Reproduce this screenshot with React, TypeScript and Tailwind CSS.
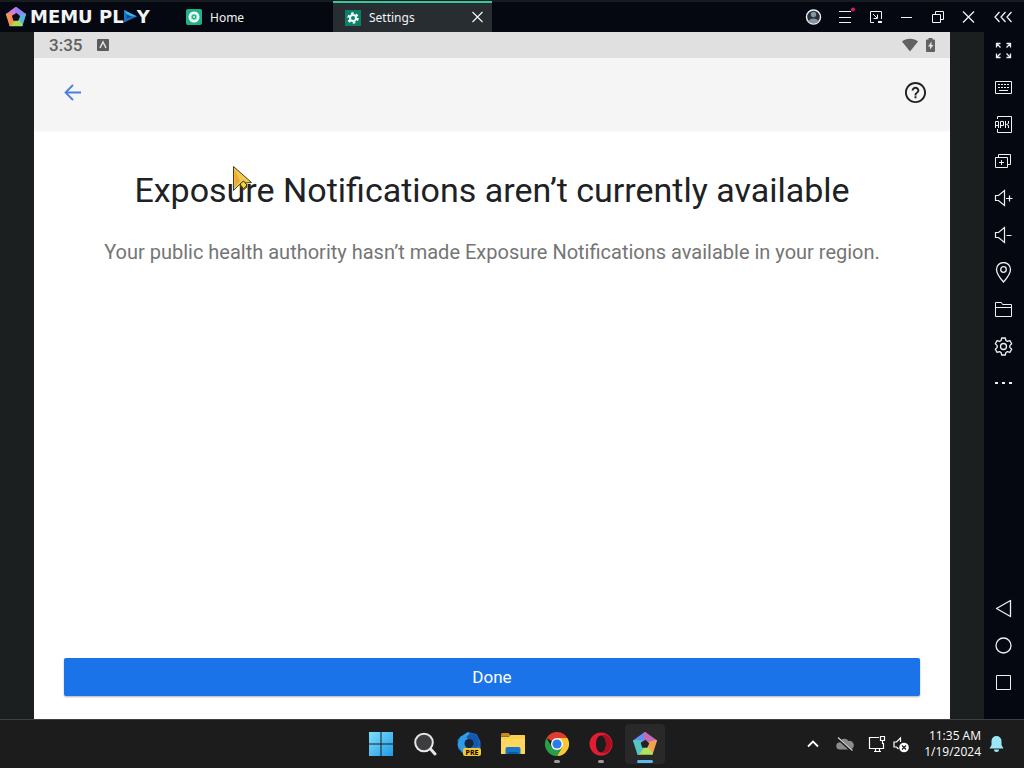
import type { ReactNode } from 'react'

interface IconProps {
  children: ReactNode
  size?: number
  width?: number
}

// Outline icon on a 21x21 grid, one unit per pixel by default
const Icon = ({ children, size = 21, width = 1 }: IconProps) => (
  <svg width={size} height={size} viewBox="0 0 21 21" fill="none" stroke="currentColor" strokeWidth={width} aria-hidden="true">
    {children}
  </svg>
)

const PentagonLogo = ({ size }: { size: number }) => (
  <svg width={size} height={size} viewBox="0 0 24 24" strokeLinejoin="round" strokeWidth="2" aria-hidden="true">
    <path d="M12 2 2 9.200 8.500 10.500 14 7.500Z" fill="#d07be0" stroke="#d07be0" />
    <path d="M12 2 22 9.200 16 11.500 12 7.500Z" fill="#9a80f5" stroke="#9a80f5" />
    <path d="M22 9.200 18.200 21 13.500 16.500 16 11Z" fill="#56b8d8" stroke="#56b8d8" />
    <path d="M18.200 21H5.800L9 15.500 14.500 16Z" fill="#a6dc58" stroke="#a6dc58" />
    <path d="M5.800 21 2 9.200 8 9.500 9.500 16Z" fill="#f6924f" stroke="#f6924f" />
    <path d="M12.500 7.500 16.500 11 14.500 16H9.200L7.500 10.500Z" fill="#0b0d18" />
  </svg>
)

const TaskbarPentagon = () => (
  <svg width="26" height="26" viewBox="0 0 24 24" strokeLinejoin="round" strokeWidth="2" aria-hidden="true">
    <path d="M12 2 2 9.200 8 11 14 7.500Z" fill="#668df0" stroke="#668df0" />
    <path d="M12 2 22 9.200 17 12 12 7.500Z" fill="#c56bb5" stroke="#c56bb5" />
    <path d="M22 9.200 18.200 21 13.500 16.500 16 11Z" fill="#f0a453" stroke="#f0a453" />
    <path d="M18.200 21H5.800L9 15.500 14.500 16Z" fill="#b5e05b" stroke="#b5e05b" />
    <path d="M5.800 21 2 9.200 8 9.500 9.500 16Z" fill="#54c5c4" stroke="#54c5c4" />
    <path d="M12.500 8 16 11.500 14 15.500H9.500L8 10.800Z" fill="#222" />
  </svg>
)

const windowButtons = [
  {
    label: 'Account',
    icon: (
      <Icon>
        <circle cx="10.500" cy="10" r="7" fill="#27313c" strokeWidth="1.400" />
        <circle cx="10.500" cy="7.500" r="2.700" fill="#8794a2" stroke="none" />
        <path d="M5.500 14.500c1-4 9-4 10 0-2.500 2.600-7.500 2.600-10 0Z" fill="#8794a2" stroke="none" />
      </Icon>
    ),
  },
  {
    label: 'Menu',
    icon: (
      <Icon>
        <path d="M5 4.500h12M5 10.500h12M5 15.500h12" />
        <circle cx="19" cy="2.500" r="2" fill="#d81b60" stroke="none" />
      </Icon>
    ),
  },
  {
    label: 'Mini window',
    icon: (
      <Icon>
        <path d="M9 15.500H5.500v-11h11V12M8 7l4 4M12.500 7.500v4h-4" />
        <path d="M13 15h4" strokeWidth="2" />
      </Icon>
    ),
  },
  { label: 'Minimize', icon: <Icon><path d="M5 10.500h11" /></Icon> },
  {
    label: 'Restore',
    icon: <Icon><path d="M5.500 7.500h8v8h-8zM8.500 7V4.500h8v8H14" /></Icon>,
  },
  {
    label: 'Close',
    icon: <Icon width={1.3}><path d="m5 4.500 11 11M16 4.500l-11 11" /></Icon>,
  },
]

const sideTools = [
  {
    label: 'Full screen',
    icon: (
      <Icon width={1.3}>
        <path d="M7.500 3.500h-4v4M3.500 3.500l4 4M13.500 3.500h4v4M17.500 3.500l-4 4M3.500 13.500v4h4M3.500 17.500l4-4M17.500 13.500v4h-4M17.500 17.500l-4-4" />
      </Icon>
    ),
  },
  {
    label: 'Keymapping',
    icon: (
      <Icon>
        <path d="M2.500 4.500h16v12h-16z" />
        <path d="M5 7.500h11M5 10.500h11" strokeDasharray="2 1" />
        <path d="M6 13.500h9" />
      </Icon>
    ),
  },
  {
    label: 'Install APK',
    icon: (
      <Icon>
        <path d="M4.500 5V2.500h14v16h-14V15" />
        <path d="M2.500 14V7.500h3V14M2.500 11.500h3M7.500 14V7.500h3v4h-3M12.500 7v7M15.500 7v2.500l-2 1 2 1V14" />
      </Icon>
    ),
  },
  {
    label: 'Multiple instances',
    icon: <Icon><path d="M2.500 6.500h12v10h-12zM5.500 6V3.500h12v10H15M8.500 9v5M6 11.500h5" /></Icon>,
  },
  {
    label: 'Volume up',
    icon: <Icon width={1.2}><path d="M2.500 7.500h3l6-5v15l-6-5h-3zM13 10.500h6.500M16.500 7.500v6" /></Icon>,
  },
  {
    label: 'Volume down',
    icon: <Icon width={1.2}><path d="M2.500 7.500h3l6-5v15l-6-5h-3zM13.500 10.500h5" /></Icon>,
  },
  {
    label: 'Location',
    icon: (
      <Icon width={1.3}>
        <path d="M10.500 20C6 15 3.500 11.500 3.500 7.500a7 7 0 0 1 14 0c0 4-2.500 7.500-7 12.500Z" />
        <circle cx="10.500" cy="7.500" r="2.800" />
      </Icon>
    ),
  },
  {
    label: 'Shared folder',
    icon: <Icon><path d="M2.500 17.500v-14h6l1 2h9v12zM2.500 8.500h16" /></Icon>,
  },
  {
    label: 'Settings',
    icon: (
      <Icon width={1.3}>
        <path d="M8.700 2h3.600l.6 2.500 1.500.9 2.500-.8 1.800 3.200-1.900 1.800v1.800l1.900 1.800-1.800 3.200-2.500-.8-1.500.9-.6 2.500H8.700l-.6-2.500-1.500-.9-2.500.8-1.800-3.200 1.900-1.800V9.600L2.300 7.800l1.800-3.200 2.500.8 1.500-.9Z" strokeLinejoin="round" />
        <circle cx="10.500" cy="10.500" r="3" />
      </Icon>
    ),
  },
  {
    label: 'More',
    icon: <Icon width={2}><path d="M2 10h3M9 10h3M16 10h3" /></Icon>,
  },
]

const navTools = [
  { label: 'Back', icon: <Icon width={1.3}><path d="M3.500 10.500 17.500 2.500v16z" strokeLinejoin="round" /></Icon> },
  { label: 'Home', icon: <Icon width={1.3}><circle cx="10.500" cy="10.500" r="7.500" /></Icon> },
  { label: 'Recents', icon: <Icon><path d="M3.500 3.500h14v14h-14z" /></Icon> },
]

const taskbarApps = [
  {
    label: 'Start',
    icon: (
      <svg width="24" height="24" viewBox="0 0 24 24" aria-hidden="true">
        <defs>
          <linearGradient id="win" x1="0" y1="0" x2="1" y2="1">
            <stop offset="0" stopColor="#7fe0fb" />
            <stop offset="1" stopColor="#1e9be8" />
          </linearGradient>
        </defs>
        <path d="M0 0h11.500v11.500H0zM12.500 0H24v11.500H12.500zM0 12.500h11.500V24H0zM12.500 12.500H24V24H12.500z" fill="url(#win)" />
      </svg>
    ),
  },
  {
    label: 'Search',
    icon: (
      <svg width="24" height="24" viewBox="0 0 24 24" fill="none" stroke="#e6e6e6" aria-hidden="true">
        <circle cx="11" cy="10.500" r="8.800" fill="#3d3d3f" strokeWidth="2" />
        <path d="m17.500 17 4.500 5" strokeWidth="3" strokeLinecap="round" />
      </svg>
    ),
  },
  {
    label: 'Copilot preview',
    icon: (
      <svg width="26" height="26" viewBox="0 0 26 26" aria-hidden="true">
        <path d="M12 2 20 4l3.500 7v7l-5 4H8l-5-5L2.500 9Z" fill="#1b6fd0" stroke="#1b6fd0" strokeWidth="2" strokeLinejoin="round" />
        <path d="M12 1 4 6 1.500 14 6 21.500l4-5-1-6 7-4Z" fill="#2f9ce8" />
        <path d="M14 2.500q6 0 8 4l2 8-6 2.500-2.500-7.500-5.500-3Z" fill="#1658ae" />
        <circle cx="13" cy="12.500" r="4.500" fill="#17263c" />
        <rect x="7" y="17" width="18" height="8" rx="2" fill="#f7c52d" />
        <text x="16" y="23.500" textAnchor="middle" className="fill-black font-['Noto_Sans',sans-serif] text-[7px] font-bold">PRE</text>
      </svg>
    ),
  },
  {
    label: 'File Explorer',
    icon: (
      <svg width="26" height="24" viewBox="0 0 26 24" aria-hidden="true">
        <path d="M1 2.500Q1 1 2.500 1h6L11 4H1Z" fill="#c98a17" />
        <path d="M1 4.500h8L11 3h13.500q.5 0 .5 1v18H1Z" fill="#fbcf4d" />
        <path d="M1 7h24v14q0 1-1 1H2q-1 0-1-1Z" fill="#ffd75e" />
        <path d="M5.500 22v-5q0-2 2-2h11q2 0 2 2v5Z" fill="#1976c9" />
        <path d="M8 22v-2h10v2Z" fill="#0f5aa5" />
      </svg>
    ),
  },
  {
    label: 'Google Chrome',
    running: true,
    icon: (
      <svg width="24" height="24" viewBox="0 0 24 24" aria-hidden="true">
        <path d="M12 12 1.600 6A12 12 0 0 1 22.400 6Z" fill="#e33b2e" />
        <path d="M12 12V6h10.400A12 12 0 0 1 12 24l5.200-9Z" fill="#fcc934" />
        <path d="M12 12 12 24A12 12 0 0 1 1.600 6l5.200 9 5.200 3 5.200-3L12 24Z" fill="#2a9d49" />
        <circle cx="12" cy="12" r="6" fill="#fff" />
        <circle cx="12" cy="12" r="4.600" fill="#2b7de9" />
      </svg>
    ),
  },
  {
    label: 'Opera',
    running: true,
    icon: (
      <svg width="24" height="24" viewBox="0 0 24 24" aria-hidden="true">
        <path d="M12 0.500a11.500 11.500 0 1 0 0 23 11.500 11.500 0 0 0 0-23Zm0 3c3 0 5 3.800 5 8.500s-2 8.500-5 8.500S7 16.700 7 12s2-8.500 5-8.500Z" fill="#e31b33" fillRule="evenodd" />
        <path d="M12 3.500c3 0 5 3.800 5 8.500s-2 8.500-5 8.500c4 2 7.500-.5 8.700-2.800 3.500-5 2-10 0-12C18.500 3 15.500 2 12 3.500Z" fill="#a80f20" />
      </svg>
    ),
  },
  { label: 'MEmu', active: true, icon: <TaskbarPentagon /> },
]

const TitleBar = () => (
  <header className="flex h-8 shrink-0 border-t-2 border-[#171c20] bg-[#050811] text-[#f1f3f5]">
    <div className="flex w-[174px] shrink-0 items-center gap-[3px] pb-px pl-[5px]">
      <PentagonLogo size={22} />
      <span className="flex items-center font-['DejaVu_Sans',sans-serif] text-[18px] leading-5 font-bold whitespace-pre">
        MEMU PL
        <svg width="13" height="13" viewBox="0 0 13 13" role="img" aria-label="A">
          <path d="M0 0v12.500L13 6.500Z" fill="#1a6fc4" />
          <path d="M0 0 13 6.500 4 6Z" fill="#36b4e8" />
          <path d="M3 4.500v4l4.500-2Z" fill="#0d3d7c" />
        </svg>
        Y
      </span>
    </div>
    <nav className="flex min-w-0 flex-1" aria-label="Tabs">
      <button className="flex w-[159px] items-center gap-2 px-3">
        <svg width="16" height="16" viewBox="0 0 16 16" aria-hidden="true">
          <rect width="16" height="16" rx="2" fill="#1fb287" />
          <circle cx="8" cy="8" r="4.500" fill="#a9ecd6" stroke="#fff" strokeWidth="2" />
          <circle cx="8" cy="8" r="1.800" fill="none" stroke="#1fb287" strokeWidth="1.300" />
        </svg>
        <span className="pt-px font-['Noto_Sans',sans-serif] text-xs">Home</span>
      </button>
      <div className="-mt-px flex w-[159px] items-center border-t-2 border-[#37c79d] bg-[#272d31] px-3">
        <button className="flex flex-1 items-center gap-2">
          <svg width="16" height="16" viewBox="0 0 16 16" aria-hidden="true">
            <rect width="16" height="16" fill="#0c8069" />
            <circle cx="8" cy="8" r="4.500" fill="none" stroke="#fff" strokeWidth="2.500" strokeDasharray="2.400 2.312" />
            <circle cx="8" cy="8" r="3" fill="none" stroke="#eefaf7" strokeWidth="2" />
          </svg>
          <span className="font-['Noto_Sans',sans-serif] text-xs">Settings</span>
        </button>
        <button aria-label="Close tab" className="-mr-2">
          <Icon width={1.2}><path d="m5.500 5 10 10M15.500 5l-10 10" /></Icon>
        </button>
      </div>
    </nav>
    <div className="flex shrink-0">
      {windowButtons.map(({ label, icon }) => (
        <button key={label} aria-label={label} className="flex w-[31px] items-center justify-center">
          {icon}
        </button>
      ))}
      <button aria-label="Collapse sidebar" className="flex w-10 items-center justify-center pr-px">
        <Icon width={1.3}><path d="M6.500 5 2 10l4.500 5M12.500 5 8 10l4.500 5M18.500 5 14 10l4.500 5" /></Icon>
      </button>
    </div>
  </header>
)

const StatusBar = () => (
  <div className="flex h-[26px] shrink-0 items-center bg-[#e0e0e0] px-[15px] text-[#616161]">
    <span className="pt-0.5 text-[17px] font-medium">3:35</span>
    <svg className="ml-[15px]" width="12" height="12" viewBox="0 0 12 12" aria-hidden="true">
      <rect width="12" height="12" rx="1" fill="#5c5c5c" />
      <path d="M3 9 6 3l3 6" fill="none" stroke="#e0e0e0" strokeWidth="1.500" />
    </svg>
    <svg className="ml-auto" width="16" height="14" viewBox="0 0 16 14" aria-hidden="true">
      <path d="M8 13.500 0 3.500C4-.2 12-.2 16 3.500Z" fill="currentColor" />
    </svg>
    <svg className="ml-2" width="9" height="14" viewBox="0 0 9 14" aria-hidden="true">
      <path d="M2.500 1.500V0h4v1.500H8q1 0 1 1V13q0 1-1 1H1q-1 0-1-1V2.500q0-1 1-1Z" fill="currentColor" />
      <path d="M5.500 3.500 2 8.500h2v3L7.500 7h-2Z" fill="#e0e0e0" />
    </svg>
  </div>
)

const DeviceScreen = () => (
  <main className="flex min-w-0 flex-1 flex-col bg-white font-['Roboto',sans-serif]">
    <StatusBar />
    <div className="flex h-[72px] shrink-0 items-center justify-between bg-[#f5f5f5] px-6 pb-1 shadow-[0_1px_2px_#0000000d]">
      <button aria-label="Navigate up" className="ml-1 text-[#4a80dc]">
        <Icon width={1.8}><path d="M19 10.500H3.500M11 3l-7.500 7.500L11 18" /></Icon>
      </button>
      <button aria-label="Help" className="-mr-[3px] p-0.5 text-[#202124]">
        <svg width="23" height="23" viewBox="0 0 24 24" fill="currentColor" aria-hidden="true">
          <path d="M11 18h2v-2h-2v2zm1-17C5.900 1 1 5.900 1 12s4.900 11 11 11 11-4.900 11-11S18.100 1 12 1zm0 20c-5 0-9-4-9-9s4-9 9-9 9 4 9 9-4 9-9 9zm0-15c-2.200 0-4 1.800-4 4h2c0-1.100.9-2 2-2s2 .9 2 2c0 2-3 1.750-3 5h2c0-2.250 3-2.500 3-5 0-2.200-1.800-4-4-4z" />
        </svg>
      </button>
    </div>
    <div className="flex flex-1 flex-col px-[30px] pt-10 pb-[23px] text-center">
      <h1 className="text-[34px] leading-10 text-[#202124]">Exposure Notifications aren’t currently available</h1>
      <p className="mt-7 text-[20px] leading-7 text-[#757575]">
        Your public health authority hasn’t made Exposure Notifications available in your region.
      </p>
      <button className="mt-auto h-[38px] rounded-xs bg-[#1a73e8] pt-0.5 text-[17px] text-white shadow-[0_1px_2px_#0000004d]">
        Done
      </button>
    </div>
  </main>
)

const SideBar = () => (
  <aside className="flex w-10 shrink-0 flex-col bg-[#050811] pr-px pb-[18px] text-[#eef0f2]">
    {sideTools.map(({ label, icon }) => (
      <button key={label} aria-label={label} className="flex h-[37px] items-center justify-center">
        {icon}
      </button>
    ))}
    <div className="mt-auto flex flex-col">
      {navTools.map(({ label, icon }) => (
        <button key={label} aria-label={label} className="flex h-[37px] items-center justify-center">
          {icon}
        </button>
      ))}
    </div>
  </aside>
)

const Taskbar = () => (
  <footer className="grid h-[49px] shrink-0 grid-cols-[1fr_auto_1fr] items-center border-t border-[#3d403f] bg-[#1c1c1c] font-['Open_Sans',sans-serif] text-white">
    <div />
    <div className="flex gap-1 pl-0.5">
      {taskbarApps.map(({ label, icon, running, active }) => (
        <button
          key={label}
          aria-label={label}
          className={`relative flex size-10 items-center justify-center rounded-sm ${active ? 'bg-[#292929]' : ''}`}
        >
          {icon}
          {running && <span className="absolute bottom-px h-[3px] w-1.5 rounded-full bg-[#9a9a9a]" />}
          {active && <span className="absolute bottom-px h-[3px] w-4 rounded-full bg-[#5cb8ee]" />}
        </button>
      ))}
    </div>
    <div className="flex items-center justify-end pr-5">
      <button aria-label="Show hidden icons" className="mr-[11px]">
        <Icon width={1.8}><path d="m5 12.500 5-5 5 5" /></Icon>
      </button>
      <button aria-label="OneDrive" className="mr-[11px]">
        <Icon>
          <path d="M5 15.500a3.500 3.500 0 0 1-.5-7 5 5 0 0 1 9-1.500 4.300 4.300 0 0 1 2 8.500Z" fill="#8b8b8b" stroke="none" />
          <path d="M2 3.500 17 17" stroke="#1c1c1c" strokeWidth="3" />
          <path d="M3 3.500 17.500 16.500" stroke="#d2d2d2" strokeWidth="1.200" />
        </Icon>
      </button>
      <button aria-label="Network" className="mr-[3px]">
        <Icon width={1.2}>
          <path d="M12 3.500H2.500v11h14V9M7 17.500h7M8.500 15v2M12.500 15v2M13.500 2.500h4v4h-4zM15.500 7v3" />
        </Icon>
      </button>
      <button aria-label="Volume" className="mr-3">
        <Icon width={1.2}>
          <path d="M9.500 8V4l-4 4H3v5h2.500l2 2" />
          <circle cx="13" cy="13.500" r="4.800" fill="#fff" stroke="none" />
          <path d="m11 11.500 4 4M15 11.500l-4 4" stroke="#1c1c1c" />
        </Icon>
      </button>
      <button className="text-right text-xs leading-4 whitespace-nowrap">
        <span className="block">11:35 AM</span>
        <span className="block">1/19/2024</span>
      </button>
      <button aria-label="Notifications" className="ml-2 text-[#9be7f7]">
        <svg width="15" height="16" viewBox="0 0 15 16" fill="currentColor" aria-hidden="true">
          <path d="M7.500 0a5 5 0 0 1 5 5v4l2 3.500H.500L2.500 9V5a5 5 0 0 1 5-5ZM5 13.500h5a2.500 2.500 0 0 1-5 0Z" />
        </svg>
      </button>
    </div>
  </footer>
)

const Cursor = () => (
  <svg className="pointer-events-none absolute top-[165px] left-[232px]" width="22" height="28" viewBox="0 0 22 28" aria-hidden="true">
    <path d="M1.500 1.500v24l6-6 4 5.500 3.500-3-2-4 6.500-.500Z" fill="#f2c94c" stroke="#4a3d1c" strokeLinejoin="round" />
    <path d="M2.500 4v19L8 16Z" fill="#eda93a" />
    <path d="m8 19 3.500-3 3.500 4-3.500 4Z" fill="#edda3c" stroke="#332b16" />
  </svg>
)

export default function App() {
  return (
    <div className="relative flex min-h-screen flex-col bg-[#1b1f20]">
      <TitleBar />
      <div className="flex flex-1">
        <div className="flex min-w-0 flex-1 px-[34px]">
          <DeviceScreen />
        </div>
        <SideBar />
      </div>
      <Taskbar />
      <Cursor />
    </div>
  )
}
